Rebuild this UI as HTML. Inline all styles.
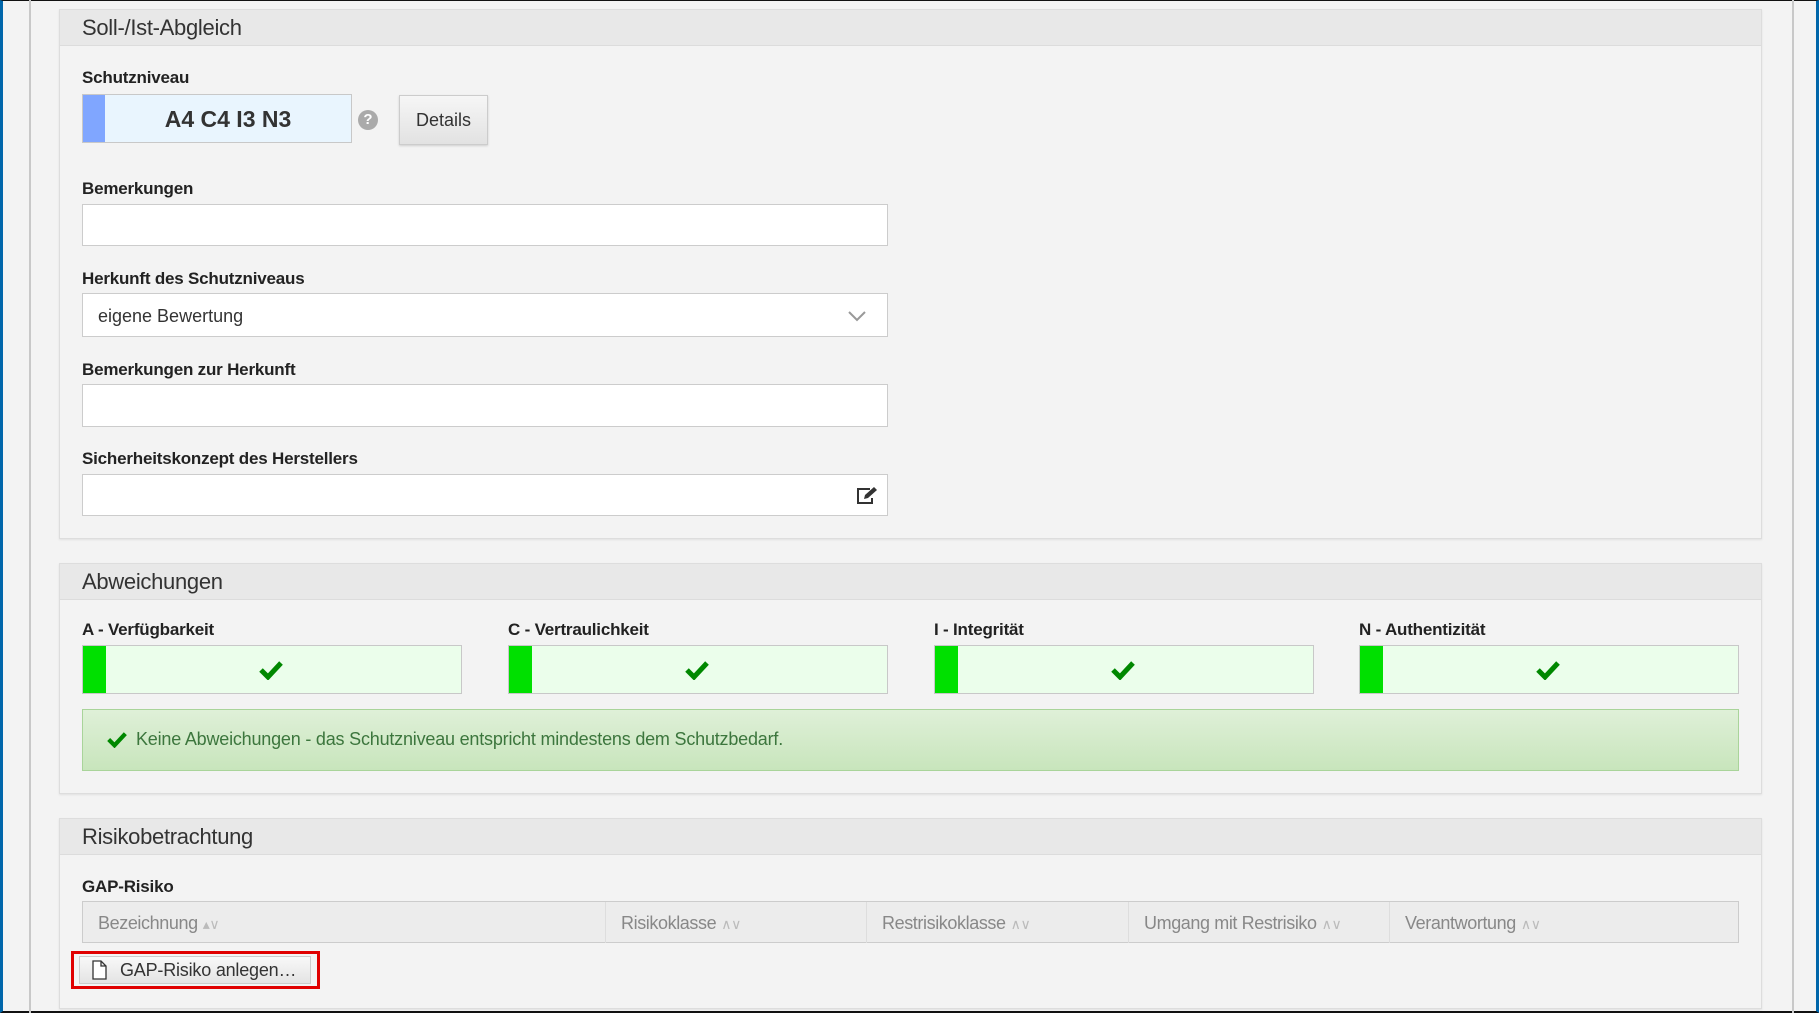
<!DOCTYPE html>
<html><head><meta charset="utf-8"><style>
*{box-sizing:border-box;margin:0;padding:0}
body{width:1819px;height:1013px;background:#f3f3f3;position:relative;overflow:hidden;font-family:"Liberation Sans",sans-serif;color:#222}
.a{position:absolute}
.panel{position:absolute;left:59px;width:1703px;border:1px solid #ddd;background:#f3f3f3;box-shadow:0 1px 2px rgba(0,0,0,.08)}
.ph{height:36px;background:#e8e8e8;border-bottom:1px solid #dcdcdc;font-size:22px;color:#333;padding:5px 0 0 22px;letter-spacing:-.3px}
.lbl{position:absolute;font-weight:bold;font-size:17px;color:#222;letter-spacing:-.2px;margin-top:1px}
.inp{position:absolute;left:82px;width:806px;background:#fff;border:1px solid #ccc}
.box{position:absolute;top:645px;height:49px;width:380px;background:#ebfeeb;border:1px solid #c8c8c8}
.box i{position:absolute;left:0;top:0;bottom:0;width:23px;background:#00e000}
.box svg{position:absolute;left:176px;top:14px}
.th{position:absolute;top:0;height:41px;border-right:1px solid #ddd;font-size:18px;color:#888;padding:11px 0 0 15px;letter-spacing:-.4px}
.th span{font-size:14px;color:#bbb;margin-left:5px}
</style></head><body>
<div class="a" style="left:0;top:0;width:1819px;height:1013px;border:1px solid #111;border-left:3px solid #06a;border-right:3px solid #06a;border-bottom:2px solid #111"></div>
<div class="a" style="left:29px;top:0;width:2px;height:1013px;background:#c8c8c8"></div>
<div class="a" style="left:1792px;top:0;width:2px;height:1013px;background:#c8c8c8"></div>

<div class="panel" style="top:9px;height:530px"><div class="ph">Soll-/Ist-Abgleich</div></div>
<div class="lbl" style="left:82px;top:67px">Schutzniveau</div>
<div class="a" style="left:82px;top:94px;width:270px;height:49px;background:#e9f5fe;border:1px solid #c8c8c8"></div>
<div class="a" style="left:83px;top:95px;width:22px;height:47px;background:#80a6ff"></div>
<div class="a" style="left:105px;top:106px;width:246px;text-align:center;font-weight:bold;font-size:23px;color:#333">A4 C4 I3 N3</div>
<div class="a" style="left:358px;top:110px;width:20px;height:20px;border-radius:50%;background:#aaa;color:#fff;font-weight:bold;font-size:15px;text-align:center;line-height:20px">?</div>
<div class="a" style="left:399px;top:95px;width:89px;height:50px;border:1px solid #ccc;background:linear-gradient(#f6f6f6,#e2e2e2);font-size:18px;color:#333;text-align:center;line-height:48px;box-shadow:0 1px 2px rgba(0,0,0,.15)">Details</div>

<div class="lbl" style="left:82px;top:178px">Bemerkungen</div>
<div class="inp" style="top:204px;height:42px"></div>
<div class="lbl" style="left:82px;top:268px">Herkunft des Schutzniveaus</div>
<div class="inp" style="top:293px;height:44px;font-size:18px;color:#333;padding:12px 0 0 15px">eigene Bewertung
<svg class="a" style="left:765px;top:17px" width="18" height="11" viewBox="0 0 18 11"><path d="M1 1l8 8 8-8" stroke="#999" stroke-width="2" fill="none"/></svg></div>
<div class="lbl" style="left:82px;top:359px">Bemerkungen zur Herkunft</div>
<div class="inp" style="top:384px;height:43px"></div>
<div class="lbl" style="left:82px;top:448px">Sicherheitskonzept des Herstellers</div>
<div class="inp" style="top:474px;height:42px">
<svg class="a" style="left:773px;top:11px" width="22" height="19" viewBox="0 0 22 19"><path d="M14 3H2v14h14v-5" stroke="#333" stroke-width="2" fill="none"/><path d="M8 13l1-4 9-8 3 3-9 8z" fill="#333"/></svg></div>

<div class="panel" style="top:563px;height:231px"><div class="ph">Abweichungen</div></div>
<div class="lbl" style="left:82px;top:619px">A - Verfügbarkeit</div>
<div class="lbl" style="left:508px;top:619px">C - Vertraulichkeit</div>
<div class="lbl" style="left:934px;top:619px">I - Integrität</div>
<div class="lbl" style="left:1359px;top:619px">N - Authentizität</div>
<div class="box" style="left:82px"><i></i><svg width="24" height="20" viewBox="0 0 24 20"><path d="M2 10l7 7L22 3" stroke="#080" stroke-width="5" fill="none"/></svg></div>
<div class="box" style="left:508px"><i></i><svg width="24" height="20" viewBox="0 0 24 20"><path d="M2 10l7 7L22 3" stroke="#080" stroke-width="5" fill="none"/></svg></div>
<div class="box" style="left:934px"><i></i><svg width="24" height="20" viewBox="0 0 24 20"><path d="M2 10l7 7L22 3" stroke="#080" stroke-width="5" fill="none"/></svg></div>
<div class="box" style="left:1359px"><i></i><svg width="24" height="20" viewBox="0 0 24 20"><path d="M2 10l7 7L22 3" stroke="#080" stroke-width="5" fill="none"/></svg></div>
<div class="a" style="left:82px;top:709px;width:1657px;height:62px;background:linear-gradient(#dff0d8,#c8e5bc);border:1px solid #a9d49a;font-size:18px;color:#3c763d;padding:19px 0 0 53px;letter-spacing:-.2px">
<svg class="a" style="left:24px;top:21px" width="20" height="17" viewBox="0 0 24 20"><path d="M2 10l7 7L22 3" stroke="#080" stroke-width="5" fill="none"/></svg>Keine Abweichungen - das Schutzniveau entspricht mindestens dem Schutzbedarf.</div>

<div class="panel" style="top:818px;height:191px"><div class="ph">Risikobetrachtung</div></div>
<div class="lbl" style="left:82px;top:876px">GAP-Risiko</div>
<div class="a" style="left:82px;top:901px;width:1657px;height:42px;background:#ececec;border:1px solid #ccc">
<div class="th" style="left:0;width:523px">Bezeichnung<span>▴∨</span></div>
<div class="th" style="left:523px;width:261px">Risikoklasse<span>∧∨</span></div>
<div class="th" style="left:784px;width:262px">Restrisikoklasse<span>∧∨</span></div>
<div class="th" style="left:1046px;width:261px">Umgang mit Restrisiko<span>∧∨</span></div>
<div class="th" style="left:1307px;width:349px;border:0">Verantwortung<span>∧∨</span></div>
</div>
<div class="a" style="left:71px;top:951px;width:249px;height:38px;border:3px solid #e00000"></div>
<div class="a" style="left:79px;top:956px;width:232px;height:28px;border:1px solid #ccc;background:linear-gradient(#f8f8f8,#e4e4e4);font-size:18px;color:#333;padding:3px 0 0 40px;letter-spacing:-.2px">
<svg class="a" style="left:12px;top:3px" width="15" height="20" viewBox="0 0 15 20"><path d="M1 1h8l5 5v13H1z M9 1v5h5" stroke="#333" stroke-width="1.3" fill="#fff"/></svg>GAP-Risiko anlegen…</div>
</body></html>
